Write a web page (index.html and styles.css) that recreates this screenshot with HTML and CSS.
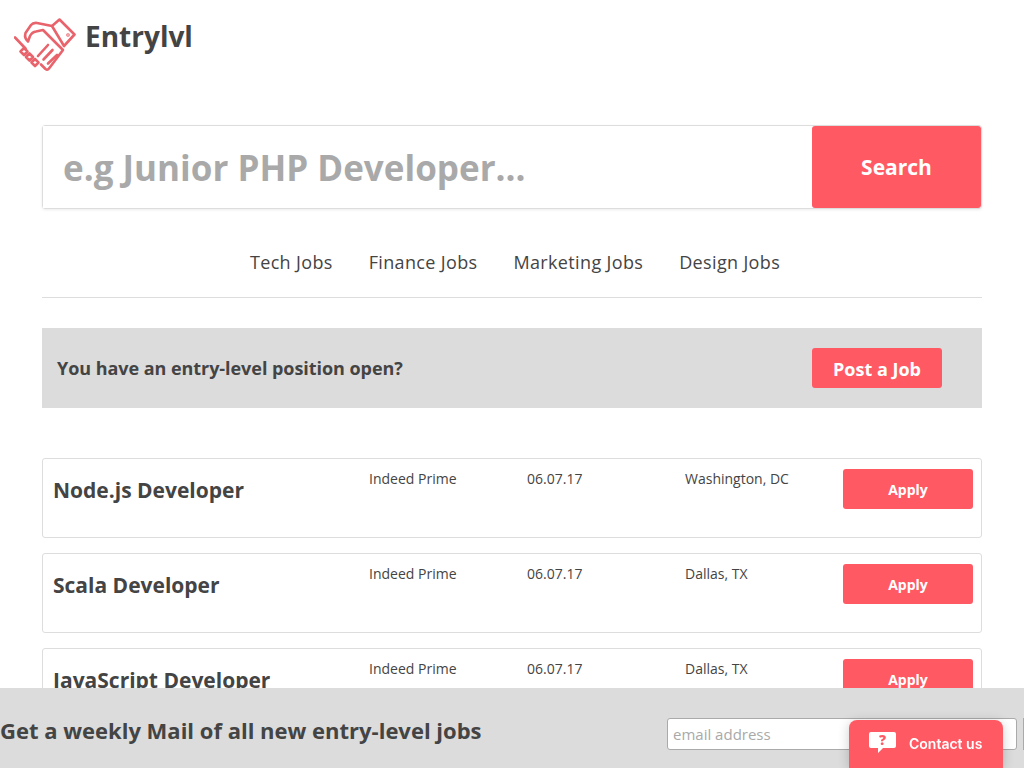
FILE: index.html
```html
<!DOCTYPE html>
<html lang="en">
<head>
    <meta charset="UTF-8">
    <title>Entrylvl</title>
    <link rel="stylesheet" href="styles.css">
</head>
<body>

    <header class="logo">
        <svg class="logo-icon" width="62" height="58" viewBox="14 15 62 58" fill="none" stroke="#e8636b" stroke-width="2.6" stroke-linejoin="round" stroke-linecap="round">
            <path d="M52 26 L59.5 19.5 L74.5 34.5 L64 46 Z"/>
            <path d="M52 26 L37 23 Q33 22.5 31 25 L25.5 33 Q24 38 28 41.5 L30 36 Q32 32 36 31.5 L43 30 L63 50 L49 68.5 Q47.5 70.5 45.5 69 L41 64.5"/>
            <path d="M57 55 L48 63.5 M52.5 50 L43.5 59.5 M48 45 L38 56"/>
            <path d="M15 37.5 L25.5 48.5"/>
            <path d="M24 48 L20.5 51.5 L24 55 L27.5 51.5 Z M29.5 53.5 L26 57 L29.5 60.5 L33 57 Z M35 59 L31.5 62.5 L35 66 L38.5 62.5 Z"/>
            <circle cx="68" cy="35" r="0.5"/>
        </svg>
        <span class="logo-text">Entrylvl</span>
    </header>

    <main class="container">
        <form class="search">
            <input class="search-input" type="text" placeholder="e.g Junior PHP Developer...">
            <button type="button" class="search-btn">Search</button>
        </form>

        <nav class="categories">
            <a href="#">Tech Jobs</a>
            <a href="#">Finance Jobs</a>
            <a href="#">Marketing Jobs</a>
            <a href="#">Design Jobs</a>
        </nav>

        <section class="post-banner">
            <p>You have an entry-level position open?</p>
            <button type="button" class="post-btn">Post a Job</button>
        </section>

        <section class="jobs">
            <article class="job">
                <h3>Node.js Developer</h3>
                <span>Indeed Prime</span>
                <span>06.07.17</span>
                <span>Washington, DC</span>
                <button type="button" class="apply-btn">Apply</button>
            </article>
            <article class="job">
                <h3>Scala Developer</h3>
                <span>Indeed Prime</span>
                <span>06.07.17</span>
                <span>Dallas, TX</span>
                <button type="button" class="apply-btn">Apply</button>
            </article>
            <article class="job">
                <h3>JavaScript Developer</h3>
                <span>Indeed Prime</span>
                <span>06.07.17</span>
                <span>Dallas, TX</span>
                <button type="button" class="apply-btn">Apply</button>
            </article>
        </section>
    </main>

    <footer class="newsletter">
        <h2>Get a weekly Mail of all new entry-level jobs</h2>
        <input class="email-input" type="text" placeholder="email address">
        <span class="email-btn"></span>
    </footer>

    <div class="contact">
        <svg width="28" height="22" viewBox="0 0 28 22">
            <path fill="#fff" d="M2 0 H25 Q27 0 27 2 V14 Q27 16 25 16 H14 L9 21 L9 16 H2 Q0 16 0 14 V2 Q0 0 2 0 Z"/>
            <text x="13.5" y="13" text-anchor="middle" class="contact-mark">?</text>
        </svg>
        <span>Contact us</span>
    </div>

</body>
</html>
```

FILE: styles.css
```css
* {
    box-sizing: border-box;
}

html, body {
    height: 100%;
}

body {
    margin: 0;
    height: 768px;
    overflow: hidden;
    font-family: "Open Sans", Arial, sans-serif;
    color: #444;
    background-color: #fff;
}

button {
    font-family: inherit;
    color: #fff;
    background-color: #ff5a64;
    border: none;
    border-radius: 3px;
    font-weight: 700;
}

.logo {
    display: flex;
    align-items: flex-start;
    gap: 9px;
    height: 125px;
    padding: 15px 0 0 14px;
}

.logo-text {
    font-size: 28px;
    font-weight: 700;
    line-height: 42px;
}

.container {
    margin: 0 42px;
}

.search {
    display: flex;
    height: 84px;
    border: 1px solid #ddd;
    border-radius: 3px;
    box-shadow: 0 1px 3px rgba(0,0,0,0.08);
}

.search-input {
    flex: 1;
    min-width: 0;
    padding: 0 20px;
    border: none;
    outline: none;
    font-family: inherit;
    font-size: 35px;
    font-weight: 700;
}

.search-input::placeholder {
    color: #a9a9a9;
    opacity: 1;
}

.search-btn {
    width: 169px;
    padding-bottom: 2px;
    font-size: 21px;
}

.categories {
    display: flex;
    justify-content: center;
    gap: 36px;
    height: 89px;
    padding: 40px 0 0 6px;
    border-bottom: 1px solid #ddd;
    font-size: 18px;
    line-height: 27px;
    letter-spacing: 0.35px;
}

.categories a {
    color: #444;
    text-decoration: none;
}

.post-banner {
    display: flex;
    align-items: center;
    justify-content: space-between;
    height: 80px;
    margin-top: 30px;
    padding: 0 40px 0 15px;
    background-color: #dcdcdc;
}

.post-banner p {
    margin: 0;
    font-size: 18px;
    font-weight: 700;
    letter-spacing: -0.05px;
}

.post-btn {
    width: 130px;
    height: 40px;
    padding-top: 2px;
    font-size: 18px;
}

.jobs {
    margin-top: 50px;
}

.job {
    display: grid;
    grid-template-columns: 316px 158px 158px 158px 130px;
    height: 80px;
    margin-bottom: 15px;
    padding: 10px 0 0 10px;
    border: 1px solid #ddd;
    border-radius: 3px;
    font-size: 14px;
    line-height: 20px;
}

.job h3 {
    margin: 6px 0 0;
    font-size: 21px;
    font-weight: 700;
    line-height: 30px;
}

.apply-btn {
    height: 40px;
    font-size: 14px;
}

.newsletter {
    position: fixed;
    left: 0;
    right: 0;
    bottom: 0;
    display: flex;
    height: 80px;
    padding-top: 30px;
    background-color: #dcdcdc;
}

.newsletter h2 {
    flex: none;
    width: 667px;
    margin: -1px 0 0;
    font-size: 22px;
    font-weight: 700;
    line-height: 27px;
}

.email-input {
    flex: none;
    width: 350px;
    height: 32px;
    padding: 0 5px;
    border: 1px solid #aaa;
    border-radius: 3px;
    outline: none;
    font-family: inherit;
    font-size: 15px;
}

.email-input::placeholder {
    color: #a9a9a9;
    opacity: 1;
}

.email-btn {
    flex: none;
    width: 2px;
    height: 32px;
    margin-left: 6px;
    background-color: #aaa;
}

.contact {
    position: fixed;
    left: 849px;
    bottom: 0;
    display: flex;
    align-items: center;
    gap: 12px;
    width: 154px;
    height: 48px;
    padding: 0 0 2px 20px;
    color: #fff;
    background-color: #ff5a64;
    border-radius: 8px 8px 0 0;
    box-shadow: 0 2px 12px rgba(0,0,0,0.2);
    font-family: Inter, "Open Sans", sans-serif;
    font-size: 14px;
    font-weight: 600;
}

.contact-mark {
    fill: #ff5a64;
    font-family: "Open Sans", sans-serif;
    font-size: 14px;
    font-weight: 800;
}
```
